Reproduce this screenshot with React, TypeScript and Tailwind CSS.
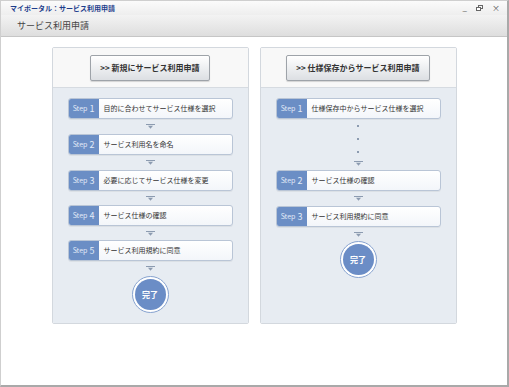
import React from "react";

const font = { fontFamily: '"Noto Sans CJK JP", "Noto Sans", sans-serif' };

const Arrow = () => (
  <svg width="9" height="5" viewBox="0 0 9 5">
    <rect x="0" y="0" width="9" height="1" fill="#8c9bb0" />
    <path d="M2 1.8 L7 1.8 L4.5 4.8 Z" fill="#8c9bb0" />
  </svg>
);

const Dot = () => <div className="w-[2px] h-[2px] bg-[#8c9bb0]" />;

const Step = ({ n, text }: { n: number; text: string }) => (
  <div className="flex h-[21px] mx-[15px] rounded-[3px] border border-[#b9c5d6] bg-gradient-to-b from-white to-[#f3f6fa] overflow-hidden shadow-[0_1px_0_rgba(0,0,0,0.05)]">
    <div className="w-[30px] bg-[#6b8ec5] flex items-center justify-center text-[#e2eaf7] gap-[2px]">
      <span className="text-[7px]">Step</span>
      <span className="text-[9px] leading-none">{n}</span>
    </div>
    <div className="flex items-center pl-[5px] text-[7px] text-[#333]">{text}</div>
  </div>
);

const Gap = ({ h }: { h: string }) => (
  <div className={`${h} flex items-center justify-center`}>
    <Arrow />
  </div>
);

const Done = () => (
  <div className="flex justify-center">
    <div className="w-[37px] h-[37px] rounded-full border border-[#86a2cf] bg-white p-[2px]">
      <div className="w-full h-full rounded-full bg-[#6b8dc6] flex items-center justify-center text-white text-[8px] font-bold">
        完了
      </div>
    </div>
  </div>
);

const Panel = ({ label, children }: { label: string; children: React.ReactNode }) => (
  <div className="w-[197px] h-[277px] border border-[#d3d8de] rounded-[2px] flex flex-col overflow-hidden">
    <div className="h-[40px] bg-[#f8f8f8] border-b border-[#d6dbe1] flex items-center justify-center">
      <div className="h-[26px] px-[9px] flex items-center rounded-[2px] border border-[#9ea3a9] bg-gradient-to-b from-white to-[#dcdfe3] shadow-[0_1px_1px_rgba(0,0,0,0.15)] text-[8px] font-bold text-[#333]">
        {label}
      </div>
    </div>
    <div className="flex-1 bg-[#e7ecf2] pt-[10px]">{children}</div>
  </div>
);

export default function App() {
  return (
    <div style={font} className="w-[509px] h-[387px] bg-[#e0e0e0]">
      <div className="w-[509px] h-[387px] flex flex-col border-l border-t border-[#cfcfcf] border-r-2 border-b-2 border-r-[#a9a9a9] border-b-[#a9a9a9] bg-white">
        <div className="h-[14px] flex items-center justify-between pl-[9px] pr-[7px] bg-gradient-to-b from-[#fbfbfb] to-[#eeeeee]">
          <span className="text-[7px] font-bold text-[#1d3d8c]">マイポータル：サービス利用申請</span>
          <div className="flex items-center gap-[9px] text-[#555] text-[8px] leading-none">
            <span>_</span>
            <svg width="7" height="6" viewBox="0 0 7 6">
              <rect x="2.5" y="0.5" width="4" height="3" fill="none" stroke="#666" />
              <rect x="0.5" y="2.5" width="4" height="3" fill="#fff" stroke="#666" />
            </svg>
            <span className="text-[#555]">×</span>
          </div>
        </div>
        <div className="h-[22px] flex items-center px-[16px] bg-gradient-to-b from-[#f3f3f3] to-[#dedede] border-b border-[#c6c6c6] text-[9px] text-[#444]">
          サービス利用申請
        </div>
        <div className="flex justify-center gap-[11px] pt-[10px]">
          <Panel label=">> 新規にサービス利用申請">
            <Step n={1} text="目的に合わせてサービス仕様を選択" />
            <Gap h="h-[15px]" />
            <Step n={2} text="サービス利用名を命名" />
            <Gap h="h-[15px]" />
            <Step n={3} text="必要に応じてサービス仕様を変更" />
            <Gap h="h-[14px]" />
            <Step n={4} text="サービス仕様の確認" />
            <Gap h="h-[14px]" />
            <Step n={5} text="サービス利用規約に同意" />
            <Gap h="h-[15px]" />
            <Done />
          </Panel>
          <Panel label=">> 仕様保存からサービス利用申請">
            <Step n={1} text="仕様保存中からサービス仕様を選択" />
            <div className="h-[51px] flex flex-col items-center pt-[6px]">
              <div className="h-[13px] flex items-start"><Dot /></div>
              <div className="h-[13px] flex items-start"><Dot /></div>
              <div className="h-[10px] flex items-start"><Dot /></div>
              <Arrow />
            </div>
            <Step n={2} text="サービス仕様の確認" />
            <Gap h="h-[15px]" />
            <Step n={3} text="サービス利用規約に同意" />
            <Gap h="h-[14px]" />
            <Done />
          </Panel>
        </div>
      </div>
    </div>
  );
}
